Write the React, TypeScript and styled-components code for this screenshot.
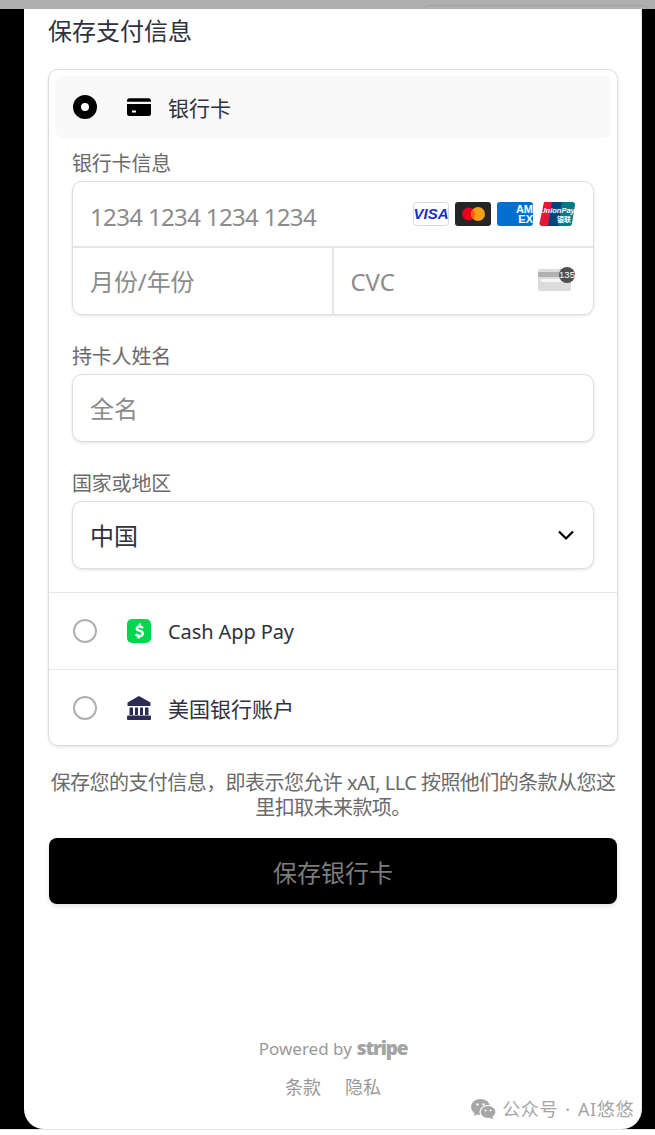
import React from 'react';
import styled, { createGlobalStyle } from 'styled-components';

const GlobalStyle = createGlobalStyle`
	html, body {
		margin: 0;
		padding: 0;
		background: #fff;
	}
	* {
		box-sizing: border-box;
	}
	body {
		font-family: "Noto Sans", "Noto Sans CJK SC", sans-serif;
		color: #30313d;
	}
`;

const Page = styled.div`
	position: relative;
	display: flex;
	flex-direction: column;
	width: 655px;
	height: 1135px;
	overflow: hidden;
`;

const TopBar = styled.div`
	display: flex;
	justify-content: flex-end;
	align-items: flex-end;
	height: 9px;
	padding-right: 7px;
	background: #afafaf;
`;

const GhostTab = styled.div`
	width: 223px;
	height: 4px;
	border: 1px solid #a2a2a2;
	border-bottom: 0;
	border-radius: 6px 6px 0 0;
`;

const Stage = styled.div`
	display: flex;
	height: 1120px;
	padding: 0 13px 0 24px;
	background: #000;
`;

const Sheet = styled.main`
	display: flex;
	flex-direction: column;
	flex: 1;
	padding: 0 23px 29px 24px;
	background: #fff;
	border-right: 1px solid #e6e6e6;
	border-radius: 0 0 20px 20px;
`;

const BottomStrip = styled.div`
	flex: 1;
	background: #fff;
	border-top: 1px solid #e6e6e6;
`;

const Title = styled.h1`
	margin: 4px 0 21px;
	height: 35px;
	font-size: 24px;
	line-height: 35px;
	font-weight: 400;
	color: #30313d;
`;

const Accordion = styled.section`
	border: 1px solid #dedede;
	border-radius: 10px;
	box-shadow: 0 1px 3px rgba(0, 0, 0, 0.12);
`;

const OpenItem = styled.div`
	padding: 6px 6px 23px;
	border-bottom: 1px solid #e6e6e6;
`;

const ActiveRow = styled.div`
	display: flex;
	align-items: center;
	height: 62px;
	padding-left: 18px;
	background: #f9f9f9;
	border-radius: 8px;
`;

const Row = styled.div<{ $last?: boolean }>`
	display: flex;
	align-items: center;
	height: ${({ $last }) => ($last ? '75px' : '77px')};
	padding-left: 24px;
	border-bottom: ${({ $last }) => ($last ? '0' : '1px solid #e6e6e6')};
`;

const Radio = styled.span<{ $checked?: boolean }>`
	flex: none;
	width: 24px;
	height: 24px;
	border-radius: 50%;
	background: #fff;
	border: ${({ $checked }) => ($checked ? '8px solid #000' : '2px solid #b0b0b0')};
`;

const RowIcon = styled.span`
	display: flex;
	flex: none;
	width: 24px;
	height: 24px;
	margin-left: 30px;
	margin-right: 17px;
`;

const RowLabel = styled.span`
	padding-top: 2px;
	font-size: 21px;
	line-height: 28px;
	color: #30313d;
`;

const LatinLabel = styled(RowLabel)`
	padding-top: 1px;
	font-size: 20px;
	letter-spacing: -0.1px;
`;

const Fields = styled.div`
	padding: 0 17px;
`;

const FieldLabel = styled.div<{ $top: number }>`
	margin-top: ${({ $top }) => $top}px;
	margin-bottom: 3px;
	height: 28px;
	font-size: 20px;
	line-height: 28px;
	color: #6a6a6a;
	letter-spacing: -0.2px;
`;

const InputBox = styled.div`
	display: flex;
	align-items: center;
	justify-content: space-between;
	height: 68px;
	padding: 0 18px 0 17px;
	background: #fff;
	border: 1px solid #dedede;
	border-radius: 10px;
	box-shadow: 0 1px 3px rgba(0, 0, 0, 0.12);
`;

const CardBox = styled.div`
	display: flex;
	flex-direction: column;
	height: 134px;
	border: 1px solid #dedede;
	border-radius: 10px;
	box-shadow: 0 1px 3px rgba(0, 0, 0, 0.12);
`;

const CardRow = styled.div`
	display: flex;
	align-items: center;
	justify-content: space-between;
	height: 66px;
	padding: 0 18px 0 17px;
	border-bottom: 2px solid #e6e6e6;
`;

const CardSplit = styled.div`
	display: flex;
	flex: 1;
`;

const CardCell = styled.div<{ $divided?: boolean }>`
	display: flex;
	flex: 1;
	align-items: center;
	justify-content: space-between;
	padding: 0 18px 0 17px;
	margin-left: ${({ $divided }) => ($divided ? '-1px' : '0')};
	border-left: ${({ $divided }) => ($divided ? '2px solid #e6e6e6' : '0')};
`;

const Placeholder = styled.span`
	padding-top: 2px;
	font-size: 24px;
	line-height: 32px;
	color: #8c8c8c;
	letter-spacing: -0.1px;
`;

const NumberHint = styled(Placeholder)`
	padding-top: 5px;
	letter-spacing: -0.65px;
`;

const Value = styled.span`
	padding-top: 1px;
	font-size: 24px;
	line-height: 32px;
	color: #30313d;
`;

const Brands = styled.div`
	display: flex;
	gap: 6px;
`;

const CvcSlot = styled.span`
	display: flex;
	margin-top: -5px;
	margin-right: -1px;
`;

const Notice = styled.p`
	margin: 24px 0 18px;
	font-size: 20px;
	line-height: 25px;
	text-align: center;
	color: #6a6a6a;
	letter-spacing: -0.56px;
`;

const SaveButton = styled.button`
	display: block;
	width: 568px;
	height: 66px;
	margin-left: 1px;
	background: #000;
	color: #7d7d7d;
	border: 0;
	border-radius: 8px;
	font-family: inherit;
	font-size: 24px;
	box-shadow: 0 2px 5px rgba(0, 0, 0, 0.12);
`;

const Footer = styled.footer`
	display: flex;
	flex-direction: column;
	align-items: center;
	margin-top: auto;
	gap: 13px;
	color: #999;
	font-size: 18px;
`;

const Powered = styled.div`
	display: flex;
	align-items: baseline;
	gap: 5px;
	height: 26px;
	font-size: 17px;
	line-height: 26px;
`;

const StripeWord = styled.span`
	font-family: "Open Sans", sans-serif;
	font-size: 19px;
	font-weight: 800;
	letter-spacing: -1.2px;
	color: #a3a3a3;
`;

const Links = styled.div`
	display: flex;
	gap: 24px;
	line-height: 26px;
`;

const Watermark = styled.div`
	position: absolute;
	right: 21px;
	bottom: 14px;
	display: flex;
	align-items: center;
	gap: 6px;
	font-size: 18px;
	line-height: 24px;
	letter-spacing: 0.6px;
	word-spacing: 2px;
	color: #a6a6a6;
`;

const CardIcon = () => (
	<svg width="24" height="24" viewBox="0 0 24 24">
		<path d="M0 5.800a2.500 2.500 0 0 1 2.500-2.500h19A2.500 2.500 0 0 1 24 5.800v1H0z" fill="#000" />
		<path d="M0 9h24v9.500a2.500 2.500 0 0 1-2.500 2.500h-19A2.500 2.500 0 0 1 0 18.500z" fill="#000" />
		<rect x="5" y="15.500" width="4" height="2" fill="#fff" />
	</svg>
);

const CashIcon = () => (
	<svg width="24" height="24" viewBox="0 0 24 24">
		<rect width="24" height="24" rx="5" fill="#00d64f" />
		<path
			d="M16 9c-.9-.9-2.200-1.400-3.400-1.400-1.700 0-2.900.8-2.900 2 0 2.700 6.100 1.500 6.100 4.800 0 1.400-1.400 2.500-3.300 2.500-1.500 0-2.800-.5-3.800-1.500"
			fill="none"
			stroke="#fff"
			strokeWidth="2.400"
		/>
		<path d="M11.800 4.500h2.300l-.5 3.500h-2.300zM10.900 16.500h2.300l-.5 3h-2.300z" fill="#fff" />
	</svg>
);

const BankIcon = () => (
	<svg width="24" height="24" viewBox="0 0 24 24">
		<path d="M12 0 23.500 6.500V10H.5V6.500z" fill="#2a2c54" />
		<path d="M2.500 11.500h3.500V19H2.500zM8 11.500h3V19H8zM13 11.500h3V19H13zM18 11.500h3.500V19H18z" fill="#2a2c54" />
		<rect x="0" y="19.500" width="24" height="4.500" rx="1" fill="#2a2c54" />
	</svg>
);

const VisaIcon = () => (
	<svg width="36" height="24" viewBox="0 0 36 24">
		<rect x=".5" y=".5" width="35" height="23" rx="3" fill="#fff" stroke="#d9d9d9" />
		<text x="18" y="17" textAnchor="middle" fontFamily="Liberation Sans" fontStyle="italic" fontWeight="700" fontSize="15" fill="#1a2fc0">
			VISA
		</text>
	</svg>
);

const MastercardIcon = () => (
	<svg width="36" height="24" viewBox="0 0 36 24">
		<rect width="36" height="24" rx="3" fill="#252525" />
		<circle cx="13.500" cy="12" r="6.500" fill="#eb001b" />
		<circle cx="23" cy="12" r="7" fill="#f79e1b" />
		<path d="M18.200 7.300a7 7 0 0 1 0 9.400 6.500 6.500 0 0 1 0-9.400z" fill="#ff5f00" />
	</svg>
);

const AmexIcon = () => (
	<svg width="36" height="24" viewBox="0 0 36 24">
		<rect width="36" height="24" rx="3" fill="#016fd0" />
		<text x="36" y="11" textAnchor="end" fontFamily="Liberation Sans" fontWeight="700" fontSize="11" fill="#fff">
			AM
		</text>
		<text x="36" y="21" textAnchor="end" fontFamily="Liberation Sans" fontWeight="700" fontSize="11" fill="#fff">
			EX
		</text>
	</svg>
);

const UnionPayIcon = () => (
	<svg width="36" height="24" viewBox="0 0 36 24">
		<path d="M5 0h10l-4 24H3a2.500 2.500 0 0 1-2.500-3z" fill="#e21836" />
		<path d="M13 0h12l-4 24H9z" fill="#00447c" />
		<path d="M23 0h10.500A2.500 2.500 0 0 1 36 3l-3 18a3 3 0 0 1-3 3H19z" fill="#007b84" />
		<text x="18.500" y="11" textAnchor="middle" fontFamily="Liberation Sans" fontStyle="italic" fontWeight="700" fontSize="7.500" fill="#fff">
			UnionPay
		</text>
		<text x="25" y="20" textAnchor="middle" fontFamily="Noto Sans CJK SC" fontWeight="700" fontSize="7" fill="#fff">
			银联
		</text>
	</svg>
);

const CvcIcon = () => (
	<svg width="38" height="24" viewBox="0 0 38 24">
		<rect x="0" y="2" width="33" height="22" rx="2" fill="#dcdcdc" />
		<rect x="0" y="5" width="33" height="5" fill="#b0b0b0" />
		<rect x="3" y="12" width="27" height="3" fill="#f6f6f6" />
		<circle cx="29" cy="8" r="8" fill="#4f4f4f" />
		<text x="29" y="11" textAnchor="middle" fontFamily="Liberation Sans" fontSize="9.500" fill="#fff">
			135
		</text>
	</svg>
);

const Chevron = () => (
	<svg width="18" height="12" viewBox="0 0 18 12">
		<path d="M2 2.500 9 9.500l7-7" fill="none" stroke="#000" strokeWidth="2.200" />
	</svg>
);

const WeChatIcon = () => (
	<svg width="25" height="21" viewBox="0 0 25 21">
		<ellipse cx="9.500" cy="8" rx="9.500" ry="8" fill="#a6a6a6" />
		<path d="M4 13l-1 4 5-2.500z" fill="#a6a6a6" />
		<ellipse cx="17" cy="13" rx="8" ry="6.500" fill="#a6a6a6" stroke="#fff" strokeWidth="1.200" />
		<path d="M21 17.500l1.500 3-4-2z" fill="#a6a6a6" />
		<circle cx="6.500" cy="5.500" r="1.200" fill="#fff" />
		<circle cx="12.500" cy="5.500" r="1.200" fill="#fff" />
		<circle cx="14.500" cy="11.500" r="1" fill="#fff" />
		<circle cx="19.500" cy="11.500" r="1" fill="#fff" />
	</svg>
);

const App: React.FC = () => {
	return (
		<Page>
			<GlobalStyle />
			<TopBar>
				<GhostTab />
			</TopBar>
			<Stage>
				<Sheet>
					<Title>保存支付信息</Title>
					<Accordion>
						<OpenItem>
							<ActiveRow>
								<Radio $checked />
								<RowIcon>
									<CardIcon />
								</RowIcon>
								<RowLabel>银行卡</RowLabel>
							</ActiveRow>
							<Fields>
								<FieldLabel $top={12}>银行卡信息</FieldLabel>
								<CardBox>
									<CardRow>
										<NumberHint>1234 1234 1234 1234</NumberHint>
										<Brands>
											<VisaIcon />
											<MastercardIcon />
											<AmexIcon />
											<UnionPayIcon />
										</Brands>
									</CardRow>
									<CardSplit>
										<CardCell>
											<Placeholder>月份/年份</Placeholder>
										</CardCell>
										<CardCell $divided>
											<Placeholder>CVC</Placeholder>
											<CvcSlot>
												<CvcIcon />
											</CvcSlot>
										</CardCell>
									</CardSplit>
								</CardBox>
								<FieldLabel $top={28}>持卡人姓名</FieldLabel>
								<InputBox>
									<Placeholder>全名</Placeholder>
								</InputBox>
								<FieldLabel $top={28}>国家或地区</FieldLabel>
								<InputBox>
									<Value>中国</Value>
									<Chevron />
								</InputBox>
							</Fields>
						</OpenItem>
						<Row>
							<Radio />
							<RowIcon>
								<CashIcon />
							</RowIcon>
							<LatinLabel>Cash App Pay</LatinLabel>
						</Row>
						<Row $last>
							<Radio />
							<RowIcon>
								<BankIcon />
							</RowIcon>
							<RowLabel>美国银行账户</RowLabel>
						</Row>
					</Accordion>
					<Notice>保存您的支付信息，即表示您允许 xAI, LLC 按照他们的条款从您这里扣取未来款项。</Notice>
					<SaveButton>保存银行卡</SaveButton>
					<Footer>
						<Powered>
							Powered by <StripeWord>stripe</StripeWord>
						</Powered>
						<Links>
							<span>条款</span>
							<span>隐私</span>
						</Links>
					</Footer>
				</Sheet>
			</Stage>
			<BottomStrip />
			<Watermark>
				<WeChatIcon />
				公众号 · AI悠悠
			</Watermark>
		</Page>
	);
};

export default App;
